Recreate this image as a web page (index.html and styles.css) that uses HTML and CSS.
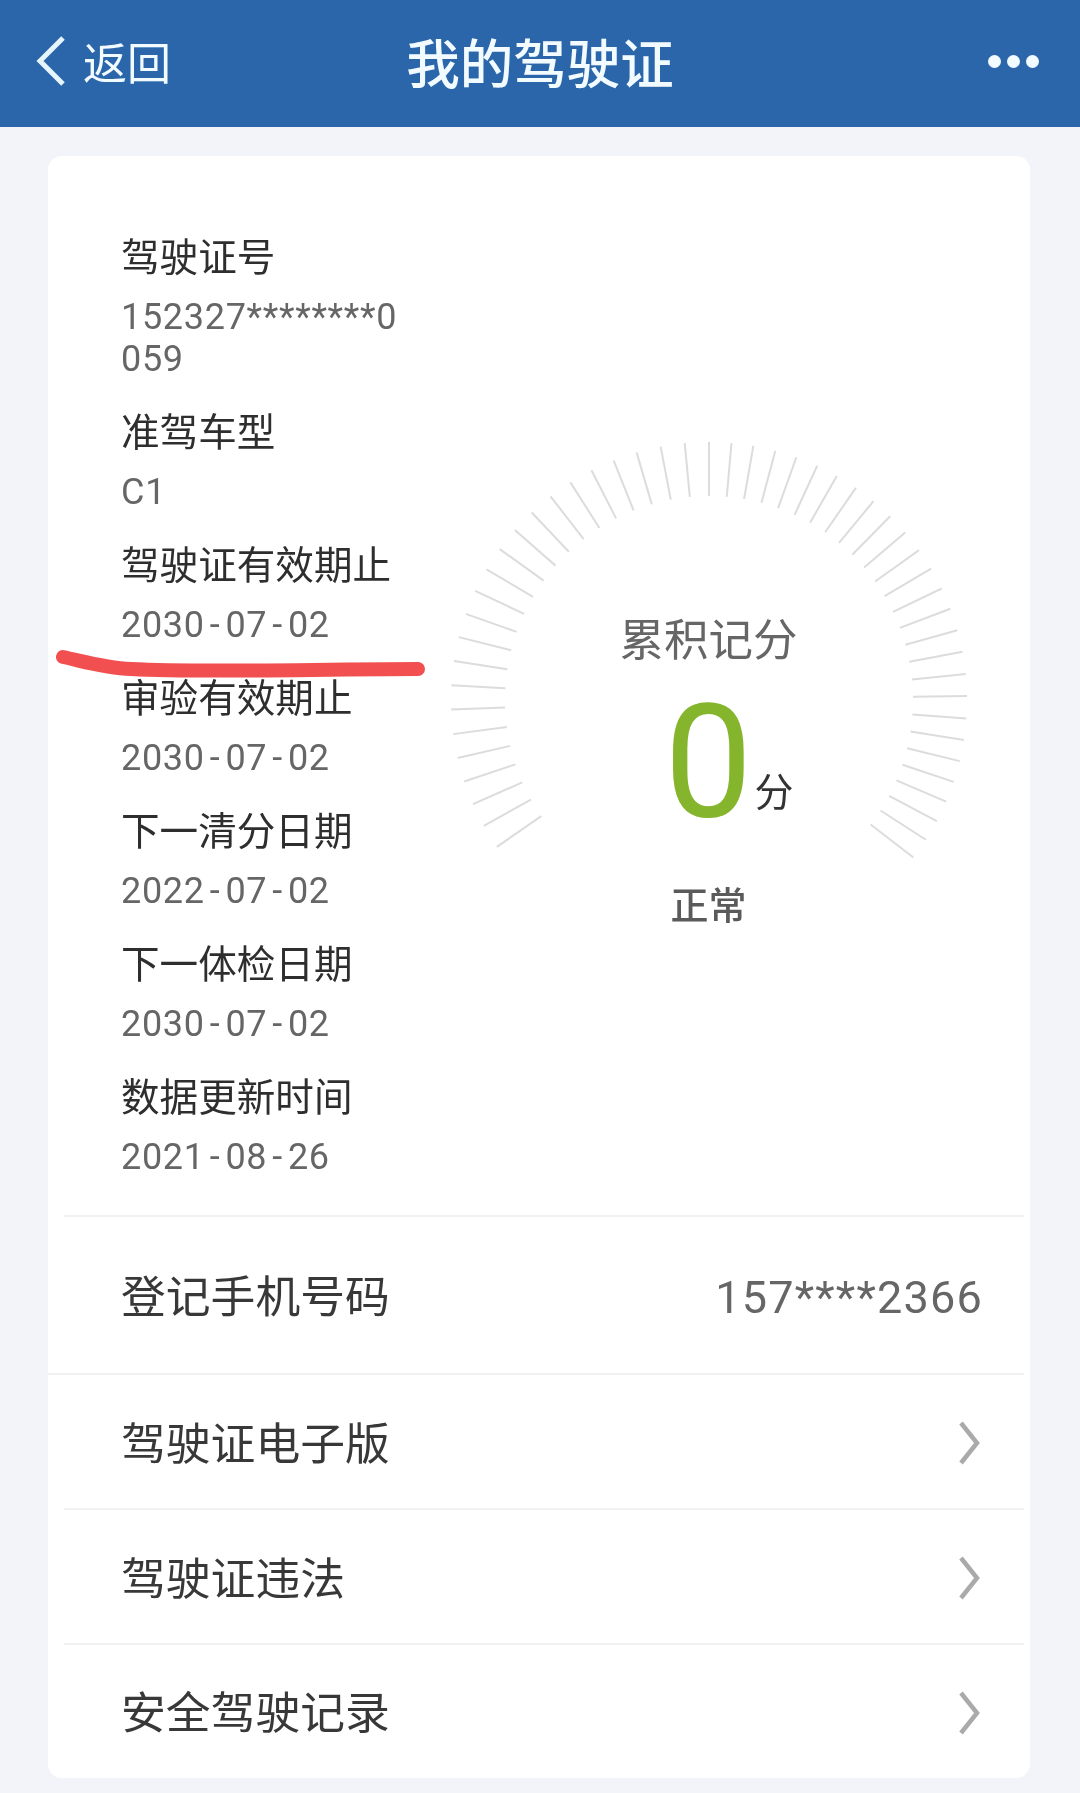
FILE: index.html
```html
<!DOCTYPE html>
<html lang="zh-CN">
<head>
<meta charset="utf-8">
<title>我的驾驶证</title>
<link rel="stylesheet" href="styles.css">
</head>
<body>
<div class="page">
  <header class="nav">
    <div class="nav-back">
      <svg class="back-icon" viewBox="0 0 32 52"><path d="M28 3 L5 26 L28 49"/></svg>
      <span class="back-text">返回</span>
    </div>
    <h1 class="nav-title">我的驾驶证</h1>
    <div class="nav-more"><i></i><i></i><i></i></div>
  </header>

  <main class="card">
    <section class="info">
      <div class="details">
        <div class="item"><div class="label">驾驶证号</div><div class="value">152327********0059</div></div>
        <div class="item"><div class="label">准驾车型</div><div class="value">C1</div></div>
        <div class="item"><div class="label">驾驶证有效期止</div><div class="value">2030<span class="dash">-</span>07<span class="dash">-</span>02</div></div>
        <div class="item"><div class="label">审验有效期止</div><div class="value">2030<span class="dash">-</span>07<span class="dash">-</span>02</div></div>
        <div class="item"><div class="label">下一清分日期</div><div class="value">2022<span class="dash">-</span>07<span class="dash">-</span>02</div></div>
        <div class="item"><div class="label">下一体检日期</div><div class="value">2030<span class="dash">-</span>07<span class="dash">-</span>02</div></div>
        <div class="item"><div class="label">数据更新时间</div><div class="value">2021<span class="dash">-</span>08<span class="dash">-</span>26</div></div>
      </div>
      <div class="gauge">
        <svg class="ticks" viewBox="0 0 535 548">
          <g transform="translate(268 269)">
            <line y1="-258" y2="-204" transform="rotate(-124.7)"/><line y1="-258" y2="-204" transform="rotate(-119.2)"/><line y1="-258" y2="-204" transform="rotate(-113.8)"/><line y1="-258" y2="-204" transform="rotate(-108.4)"/><line y1="-258" y2="-204" transform="rotate(-103)"/>
            <line y1="-258" y2="-204" transform="rotate(-97.6)"/><line y1="-258" y2="-204" transform="rotate(-92.1)"/><line y1="-258" y2="-204" transform="rotate(-86.7)"/><line y1="-258" y2="-204" transform="rotate(-81.3)"/><line y1="-258" y2="-204" transform="rotate(-75.9)"/>
            <line y1="-258" y2="-204" transform="rotate(-70.5)"/><line y1="-258" y2="-204" transform="rotate(-65)"/><line y1="-258" y2="-204" transform="rotate(-59.6)"/><line y1="-258" y2="-204" transform="rotate(-54.2)"/><line y1="-258" y2="-204" transform="rotate(-48.8)"/>
            <line y1="-258" y2="-204" transform="rotate(-43.4)"/><line y1="-258" y2="-204" transform="rotate(-37.9)"/><line y1="-258" y2="-204" transform="rotate(-32.5)"/><line y1="-258" y2="-204" transform="rotate(-27.1)"/><line y1="-258" y2="-204" transform="rotate(-21.7)"/>
            <line y1="-258" y2="-204" transform="rotate(-16.3)"/><line y1="-258" y2="-204" transform="rotate(-10.8)"/><line y1="-258" y2="-204" transform="rotate(-5.4)"/><line y1="-258" y2="-204" transform="rotate(0)"/><line y1="-258" y2="-204" transform="rotate(5)"/>
            <line y1="-258" y2="-204" transform="rotate(9.9)"/><line y1="-258" y2="-204" transform="rotate(14.9)"/><line y1="-258" y2="-204" transform="rotate(19.8)"/><line y1="-258" y2="-204" transform="rotate(24.8)"/><line y1="-258" y2="-204" transform="rotate(29.7)"/>
            <line y1="-258" y2="-204" transform="rotate(34.7)"/><line y1="-258" y2="-204" transform="rotate(39.6)"/><line y1="-258" y2="-204" transform="rotate(44.6)"/><line y1="-258" y2="-204" transform="rotate(49.5)"/><line y1="-258" y2="-204" transform="rotate(54.5)"/>
            <line y1="-258" y2="-204" transform="rotate(59.4)"/><line y1="-258" y2="-204" transform="rotate(64.4)"/><line y1="-258" y2="-204" transform="rotate(69.3)"/><line y1="-258" y2="-204" transform="rotate(74.3)"/><line y1="-258" y2="-204" transform="rotate(79.2)"/>
            <line y1="-258" y2="-204" transform="rotate(84.2)"/><line y1="-258" y2="-204" transform="rotate(89.1)"/><line y1="-258" y2="-204" transform="rotate(94.1)"/><line y1="-258" y2="-204" transform="rotate(98.9)"/><line y1="-258" y2="-204" transform="rotate(103.7)"/>
            <line y1="-258" y2="-204" transform="rotate(108.5)"/><line y1="-258" y2="-204" transform="rotate(113.2)"/><line y1="-258" y2="-204" transform="rotate(118)"/><line y1="-258" y2="-204" transform="rotate(122.8)"/><line y1="-258" y2="-204" transform="rotate(127.6)"/>
          </g>
        </svg>
        <div class="gauge-title">累积记分</div>
        <div class="score"><span class="score-num">0</span><span class="score-unit">分</span></div>
        <div class="gauge-status">正常</div>
      </div>
    </section>

    <section class="rows">
      <div class="row row-phone"><span class="row-label">登记手机号码</span><span class="row-value">157****2366</span></div>
      <div class="row row-full"><span class="row-label">驾驶证电子版</span><svg class="chevron" viewBox="0 0 22 44"><path d="M3 2 L19 22 L3 42"/></svg></div>
      <div class="row"><span class="row-label">驾驶证违法</span><svg class="chevron" viewBox="0 0 22 44"><path d="M3 2 L19 22 L3 42"/></svg></div>
      <div class="row row-last"><span class="row-label">安全驾驶记录</span><svg class="chevron" viewBox="0 0 22 44"><path d="M3 2 L19 22 L3 42"/></svg></div>
    </section>
  </main>

  <svg class="scribble" viewBox="0 0 380 30"><path d="M7 8 C 30 13 50 19 75 20 C 150 24 260 20 362 20"/></svg>
</div>
</body>
</html>
```

FILE: styles.css
```css
* { box-sizing: border-box; }
html, body { margin: 0; padding: 0; }
body {
  width: 1080px;
  height: 1793px;
  overflow: hidden;
  background: #f3f4f9;
  font-family: "Noto Sans CJK SC", "Noto Sans", sans-serif;
  color: #333;
}
.page { position: relative; width: 1080px; height: 1793px; filter: blur(0.5px); }

.nav {
  height: 127px;
  background: #2b66ab;
  color: #f2fbff;
  display: grid;
  grid-template-columns: 1fr auto 1fr;
  align-items: center;
  padding: 0 35px 5px;
}
.nav-back { display: flex; align-items: center; gap: 16px; }
.back-icon { width: 32px; height: 52px; fill: none; stroke: #e6f4fb; stroke-width: 5; }
.back-text { font-size: 44px; line-height: 52px; }
.nav-title { margin: 0; font-size: 53.5px; font-weight: 500; line-height: 70px; }
.nav-more { display: flex; justify-content: flex-end; gap: 6px; padding-right: 6px; }
.nav-more i { width: 13px; height: 13px; border-radius: 50%; background: #f2fbff; }

.card {
  margin: 29px 50px 0 48px;
  background: #fff;
  border-radius: 14px;
  height: 1622px;
  overflow: hidden;
}
.info { display: flex; padding: 73px 0 0 73px; height: 1059px; }
.details { width: 291px; flex: none; }
.item { margin-bottom: 24px; }
.label { font-size: 38.6px; line-height: 50px; margin-bottom: 17px; color: #2e2e2e; }
.value {
  font-family: Roboto, "Noto Sans", sans-serif;
  font-size: 36px;
  line-height: 42px;
  letter-spacing: 0.7px;
  color: #666;
  word-break: break-all;
}
.dash { padding: 0 5px; }

.gauge {
  position: relative;
  flex: none;
  width: 535px;
  height: 548px;
  margin: 202px 0 0 29px;
  padding-top: 176px;
  display: flex;
  flex-direction: column;
  align-items: center;
}
.ticks { position: absolute; left: 0; top: 0; width: 535px; height: 548px; }
.ticks line { stroke: #dcdcdc; stroke-width: 2; }
.gauge-title { font-size: 44.5px; line-height: 60px; color: #666; }
.score { display: flex; align-items: flex-end; padding-left: 41px; height: 178px; margin-top: 6px; }
.score-num {
  font-family: Roboto, sans-serif;
  font-size: 157px;
  line-height: 178px;
  color: #85b52d;
}
.score-unit { font-size: 39px; line-height: 50px; margin: 0 0 37px 2px; color: #333; }
.gauge-status { font-size: 38px; line-height: 50px; margin-top: 27px; font-weight: 500; color: #5a5a5a; }

.rows { display: flex; flex-direction: column; }
.row {
  margin-left: 16px;
  margin-right: 6px;
  padding: 3px 43px 0 57px;
  height: 135px;
  border-top: 2px solid #f1f1f3;
  display: flex;
  align-items: center;
  justify-content: space-between;
}
.row-phone { height: 158px; padding-top: 6px; padding-right: 41px; }
.row-phone .row-label { padding-bottom: 9px; }
.row-full { margin-left: 0; padding-left: 73px; }
.row-last { height: 134px; }
.row-label { font-size: 44.8px; line-height: 60px; padding-bottom: 5px; color: #383838; }
.row-value {
  font-family: Roboto, sans-serif;
  font-size: 45px;
  line-height: 60px;
  letter-spacing: 1.2px;
  color: #666;
}
.chevron { width: 24px; height: 44px; fill: none; stroke: #aaa; stroke-width: 4.5; }

.scribble {
  position: absolute;
  left: 56px;
  top: 649px;
  width: 380px;
  height: 30px;
  fill: none;
  stroke: #f25050;
  stroke-width: 14;
  stroke-linecap: round;
}
```
